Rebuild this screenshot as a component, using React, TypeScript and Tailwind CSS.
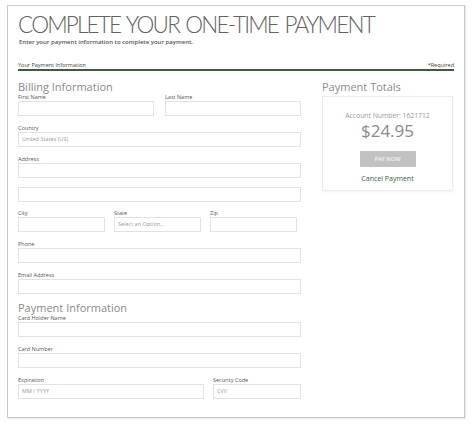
import React from 'react';

const font = { fontFamily: '"Open Sans", "Liberation Sans", sans-serif' };

function Label({ children }: { children: React.ReactNode }) {
  return <div className="h-[7px] text-[5.5px] leading-[7px] text-[#555]">{children}</div>;
}

function Input({ placeholder, className = '' }: { placeholder?: string; className?: string }) {
  return (
    <div
      className={`h-[15px] border border-[#e2e2e2] bg-white px-[3px] text-[5.5px] leading-[13px] text-[#999] ${className}`}
    >
      {placeholder}
    </div>
  );
}

function Field({ label, placeholder, className = '' }: { label: string; placeholder?: string; className?: string }) {
  return (
    <div className={className}>
      <Label>{label}</Label>
      <Input placeholder={placeholder} />
    </div>
  );
}

export default function App() {
  return (
    <div className="min-h-[424px] bg-white pl-[7px] pt-[5px]" style={font}>
      <div className="w-[458px] h-[413px] border border-[#c9c9c9] shadow-[1px_1px_1px_rgba(0,0,0,0.08)] px-[10px] pt-[7px]">
        {/* Header */}
        <h1 className="whitespace-nowrap font-['Lato',sans-serif] text-[22.5px] leading-[24px] font-light tracking-[-1.8px] [word-spacing:2px] text-[#626262]">
          COMPLETE YOUR ONE-TIME PAYMENT
        </h1>
        <p className="mt-[1px] text-[6px] leading-[8px] font-semibold text-[#555] ml-[1px]">
          Enter your payment information to complete your payment.
        </p>

        <div className="mt-[15px] flex justify-between border-b-2 border-[#3e5b3e] h-[10px] text-[5.5px] leading-[8px] text-[#444]">
          <span>Your Payment Information</span>
          <span>*Required</span>
        </div>

        <div className="flex gap-[21px]">
          {/* Left column */}
          <div className="w-[283px] flex flex-col">
            <h2 className="mt-[9px] text-[11px] leading-[14px] text-[#8a8a8a]">Billing Information</h2>

            <div className="flex gap-[11px]">
              <Field label="First Name" className="flex-1" />
              <Field label="Last Name" className="flex-1" />
            </div>
            <Field label="Country" placeholder="United States (US)" className="mt-[9px]" />
            <Field label="Address" className="mt-[9px]" />
            <Input className="mt-[9px]" />
            <div className="mt-[8px] flex gap-[9px] pr-[4px]">
              <Field label="City" className="flex-1" />
              <Field label="State" placeholder="Select an Option..." className="flex-1" />
              <Field label="Zip" className="flex-1" />
            </div>
            <Field label="Phone" className="mt-[9px]" />
            <Field label="Email Address" className="mt-[9px]" />

            <h2 className="mt-[7px] text-[11px] leading-[14px] text-[#8a8a8a]">Payment Information</h2>
            <Field label="Card Holder Name" />
            <Field label="Card Number" className="mt-[9px]" />
            <div className="mt-[9px] flex gap-[9px]">
              <Field label="Expiration" placeholder="MM / YYYY" className="w-[186px]" />
              <Field label="Security Code" placeholder="CVV" className="flex-1" />
            </div>
          </div>

          {/* Right column */}
          <div className="w-[131px] flex flex-col">
            <h2 className="mt-[9px] text-[11px] leading-[14px] text-[#8a8a8a]">Payment Totals</h2>
            <div className="mt-[2px] h-[95px] border border-[#ececec] shadow-[0_1px_2px_rgba(0,0,0,0.06)] flex flex-col items-center pt-[15px]">
              <div className="text-[6.8px] leading-[8px] text-[#9a9a9a]">Account Number: 1621712</div>
              <div className="mt-[1px] text-[17px] leading-[19px] text-[#8a8a8a]">$24.95</div>
              <button className="mt-[11px] w-[56px] h-[16px] bg-[#c2c2c2] text-white text-[5.8px] leading-[16px]">
                PAY NOW
              </button>
              <div className="mt-[7px] text-[7px] leading-[9px] text-[#3f5a48]">Cancel Payment</div>
            </div>
          </div>
        </div>
      </div>
    </div>
  );
}
